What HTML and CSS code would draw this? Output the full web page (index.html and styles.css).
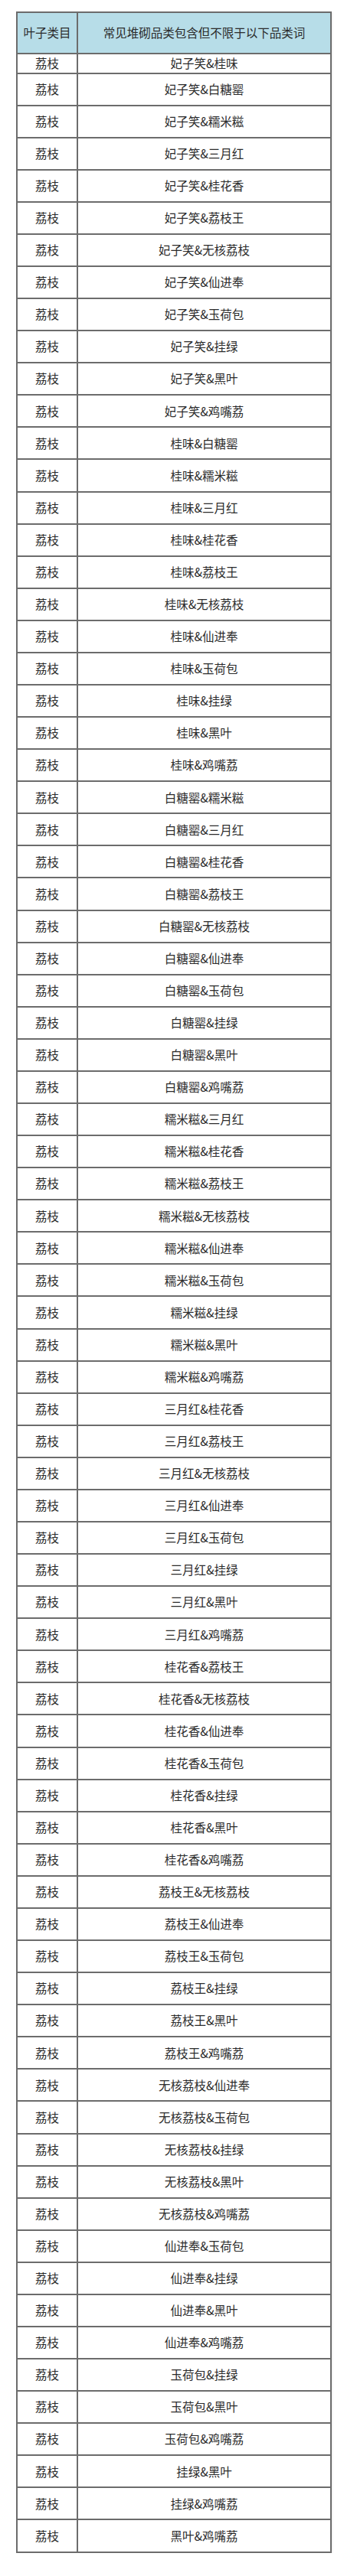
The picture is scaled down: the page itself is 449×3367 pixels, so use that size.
FILE: index.html
```html
<!DOCTYPE html>
<html lang="zh-CN">
<head>
<meta charset="utf-8">
<title>荔枝品类词</title>
<link rel="stylesheet" href="styles.css">
</head>
<body>
<table class="sheet">
<thead>
<tr class="head"><th class="c1">叶子类目</th><th class="c2">常见堆砌品类包含但不限于以下品类词</th></tr>
</thead>
<tbody>
<tr class="first"><td>荔枝</td><td>妃子笑&amp;桂味</td></tr>
<tr><td>荔枝</td><td>妃子笑&amp;白糖罂</td></tr>
<tr><td>荔枝</td><td>妃子笑&amp;糯米糍</td></tr>
<tr><td>荔枝</td><td>妃子笑&amp;三月红</td></tr>
<tr><td>荔枝</td><td>妃子笑&amp;桂花香</td></tr>
<tr><td>荔枝</td><td>妃子笑&amp;荔枝王</td></tr>
<tr><td>荔枝</td><td>妃子笑&amp;无核荔枝</td></tr>
<tr><td>荔枝</td><td>妃子笑&amp;仙进奉</td></tr>
<tr><td>荔枝</td><td>妃子笑&amp;玉荷包</td></tr>
<tr><td>荔枝</td><td>妃子笑&amp;挂绿</td></tr>
<tr><td>荔枝</td><td>妃子笑&amp;黑叶</td></tr>
<tr><td>荔枝</td><td>妃子笑&amp;鸡嘴荔</td></tr>
<tr><td>荔枝</td><td>桂味&amp;白糖罂</td></tr>
<tr><td>荔枝</td><td>桂味&amp;糯米糍</td></tr>
<tr><td>荔枝</td><td>桂味&amp;三月红</td></tr>
<tr><td>荔枝</td><td>桂味&amp;桂花香</td></tr>
<tr><td>荔枝</td><td>桂味&amp;荔枝王</td></tr>
<tr><td>荔枝</td><td>桂味&amp;无核荔枝</td></tr>
<tr><td>荔枝</td><td>桂味&amp;仙进奉</td></tr>
<tr><td>荔枝</td><td>桂味&amp;玉荷包</td></tr>
<tr><td>荔枝</td><td>桂味&amp;挂绿</td></tr>
<tr><td>荔枝</td><td>桂味&amp;黑叶</td></tr>
<tr><td>荔枝</td><td>桂味&amp;鸡嘴荔</td></tr>
<tr><td>荔枝</td><td>白糖罂&amp;糯米糍</td></tr>
<tr><td>荔枝</td><td>白糖罂&amp;三月红</td></tr>
<tr><td>荔枝</td><td>白糖罂&amp;桂花香</td></tr>
<tr><td>荔枝</td><td>白糖罂&amp;荔枝王</td></tr>
<tr><td>荔枝</td><td>白糖罂&amp;无核荔枝</td></tr>
<tr><td>荔枝</td><td>白糖罂&amp;仙进奉</td></tr>
<tr><td>荔枝</td><td>白糖罂&amp;玉荷包</td></tr>
<tr><td>荔枝</td><td>白糖罂&amp;挂绿</td></tr>
<tr><td>荔枝</td><td>白糖罂&amp;黑叶</td></tr>
<tr><td>荔枝</td><td>白糖罂&amp;鸡嘴荔</td></tr>
<tr><td>荔枝</td><td>糯米糍&amp;三月红</td></tr>
<tr><td>荔枝</td><td>糯米糍&amp;桂花香</td></tr>
<tr><td>荔枝</td><td>糯米糍&amp;荔枝王</td></tr>
<tr><td>荔枝</td><td>糯米糍&amp;无核荔枝</td></tr>
<tr><td>荔枝</td><td>糯米糍&amp;仙进奉</td></tr>
<tr><td>荔枝</td><td>糯米糍&amp;玉荷包</td></tr>
<tr><td>荔枝</td><td>糯米糍&amp;挂绿</td></tr>
<tr><td>荔枝</td><td>糯米糍&amp;黑叶</td></tr>
<tr><td>荔枝</td><td>糯米糍&amp;鸡嘴荔</td></tr>
<tr><td>荔枝</td><td>三月红&amp;桂花香</td></tr>
<tr><td>荔枝</td><td>三月红&amp;荔枝王</td></tr>
<tr><td>荔枝</td><td>三月红&amp;无核荔枝</td></tr>
<tr><td>荔枝</td><td>三月红&amp;仙进奉</td></tr>
<tr><td>荔枝</td><td>三月红&amp;玉荷包</td></tr>
<tr><td>荔枝</td><td>三月红&amp;挂绿</td></tr>
<tr><td>荔枝</td><td>三月红&amp;黑叶</td></tr>
<tr><td>荔枝</td><td>三月红&amp;鸡嘴荔</td></tr>
<tr><td>荔枝</td><td>桂花香&amp;荔枝王</td></tr>
<tr><td>荔枝</td><td>桂花香&amp;无核荔枝</td></tr>
<tr><td>荔枝</td><td>桂花香&amp;仙进奉</td></tr>
<tr><td>荔枝</td><td>桂花香&amp;玉荷包</td></tr>
<tr><td>荔枝</td><td>桂花香&amp;挂绿</td></tr>
<tr><td>荔枝</td><td>桂花香&amp;黑叶</td></tr>
<tr><td>荔枝</td><td>桂花香&amp;鸡嘴荔</td></tr>
<tr><td>荔枝</td><td>荔枝王&amp;无核荔枝</td></tr>
<tr><td>荔枝</td><td>荔枝王&amp;仙进奉</td></tr>
<tr><td>荔枝</td><td>荔枝王&amp;玉荷包</td></tr>
<tr><td>荔枝</td><td>荔枝王&amp;挂绿</td></tr>
<tr><td>荔枝</td><td>荔枝王&amp;黑叶</td></tr>
<tr><td>荔枝</td><td>荔枝王&amp;鸡嘴荔</td></tr>
<tr><td>荔枝</td><td>无核荔枝&amp;仙进奉</td></tr>
<tr><td>荔枝</td><td>无核荔枝&amp;玉荷包</td></tr>
<tr><td>荔枝</td><td>无核荔枝&amp;挂绿</td></tr>
<tr><td>荔枝</td><td>无核荔枝&amp;黑叶</td></tr>
<tr><td>荔枝</td><td>无核荔枝&amp;鸡嘴荔</td></tr>
<tr><td>荔枝</td><td>仙进奉&amp;玉荷包</td></tr>
<tr><td>荔枝</td><td>仙进奉&amp;挂绿</td></tr>
<tr><td>荔枝</td><td>仙进奉&amp;黑叶</td></tr>
<tr><td>荔枝</td><td>仙进奉&amp;鸡嘴荔</td></tr>
<tr><td>荔枝</td><td>玉荷包&amp;挂绿</td></tr>
<tr><td>荔枝</td><td>玉荷包&amp;黑叶</td></tr>
<tr><td>荔枝</td><td>玉荷包&amp;鸡嘴荔</td></tr>
<tr><td>荔枝</td><td>挂绿&amp;黑叶</td></tr>
<tr><td>荔枝</td><td>挂绿&amp;鸡嘴荔</td></tr>
<tr><td>荔枝</td><td>黑叶&amp;鸡嘴荔</td></tr>
</tbody>
</table>
</body>
</html>
```
FILE: styles.css
```css
html, body {
  margin: 0;
  padding: 0;
  background: #ffffff;
}

body {
  padding: 15px 0 0 21px;
  font-family: "Noto Sans CJK SC", "Noto Sans", "Liberation Sans", sans-serif;
  color: #2b2b2b;
}

.sheet {
  border-collapse: collapse;
  width: 412px;
  table-layout: fixed;
  box-shadow: 1px 1px 2px rgba(0, 0, 0, 0.08);
}

.sheet th,
.sheet td {
  border: 2px solid #6c6c6c;
  padding: 0;
  text-align: center;
  vertical-align: middle;
  font-size: 15.5px;
  font-weight: 400;
  line-height: 1;
  white-space: nowrap;
}

.sheet .c1 {
  width: 77px;
}

.head th {
  background: #b7dde8;
  height: 52px;
}

.sheet tbody tr {
  height: 42.08px;
}

.sheet tbody tr.first {
  height: 25.5px;
}
```
